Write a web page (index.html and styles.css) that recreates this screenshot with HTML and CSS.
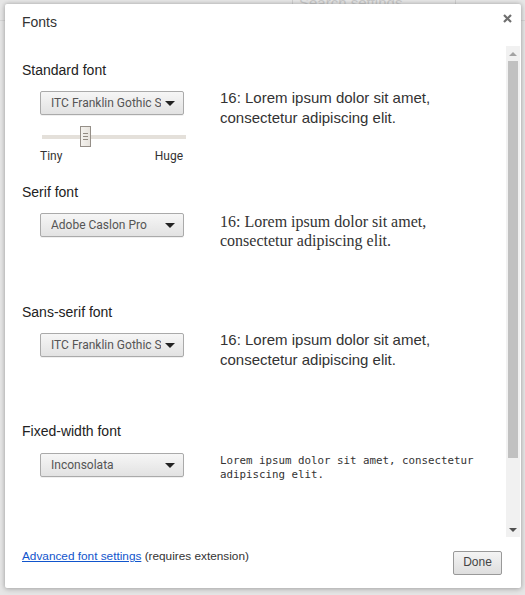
FILE: index.html
```html
<!DOCTYPE html>
<html>
<head>
<meta charset="utf-8">
<link rel="stylesheet" href="styles.css">
</head>
<body>
<div class="backdrop">
  <div class="bg-header">
    <div class="bg-search">Search settings</div>
  </div>
</div>
<div class="dialog">
  <div class="dlg-head">
    <h1 class="dlg-title">Fonts</h1>
    <svg class="close" width="9" height="9" viewBox="0 0 9 9"><path d="M1 1L8 8M8 1L1 8" stroke="#6f6f6f" stroke-width="2.2"/></svg>
  </div>
  <div class="dlg-body">
    <div class="content">
      <section class="sec sec-first">
        <h2 class="sec-title">Standard font</h2>
        <div class="sec-row">
          <div class="ctrl">
            <div class="select"><span class="sel-text">ITC Franklin Gothic S</span><span class="caret"></span></div>
            <div class="slider">
              <div class="track"></div>
              <div class="thumb"><i></i><i></i><i></i></div>
            </div>
            <div class="slider-labels"><span>Tiny</span><span>Huge</span></div>
          </div>
          <p class="sample sample-sans">16: Lorem ipsum dolor sit amet, consectetur adipiscing elit.</p>
        </div>
      </section>
      <section class="sec">
        <h2 class="sec-title">Serif font</h2>
        <div class="sec-row">
          <div class="ctrl">
            <div class="select"><span class="sel-text">Adobe Caslon Pro</span><span class="caret"></span></div>
          </div>
          <p class="sample sample-serif">16: Lorem ipsum dolor sit amet, consectetur adipiscing elit.</p>
        </div>
      </section>
      <section class="sec">
        <h2 class="sec-title">Sans-serif font</h2>
        <div class="sec-row">
          <div class="ctrl">
            <div class="select"><span class="sel-text">ITC Franklin Gothic S</span><span class="caret"></span></div>
          </div>
          <p class="sample sample-sans">16: Lorem ipsum dolor sit amet, consectetur adipiscing elit.</p>
        </div>
      </section>
      <section class="sec sec-last">
        <h2 class="sec-title">Fixed-width font</h2>
        <div class="sec-row">
          <div class="ctrl">
            <div class="select"><span class="sel-text">Inconsolata</span><span class="caret"></span></div>
          </div>
          <p class="sample sample-mono">Lorem ipsum dolor sit amet, consectetur adipiscing elit.</p>
        </div>
      </section>
    </div>
    <div class="scrollbar">
      <div class="sb-btn"><span class="tri-up"></span></div>
      <div class="sb-thumb"></div>
      <div class="sb-track"></div>
      <div class="sb-btn"><span class="tri-down"></span></div>
    </div>
  </div>
  <div class="dlg-foot">
    <p class="foot-text"><a class="link" href="#">Advanced font settings</a> (requires extension)</p>
    <button class="done">Done</button>
  </div>
</div>
</body>
</html>
```

FILE: styles.css
```css
html, body {
  margin: 0;
  padding: 0;
}
body {
  width: 525px;
  height: 595px;
  background: #e6e6e6;
  font-family: "Liberation Sans", Arial, sans-serif;
  overflow: hidden;
  position: relative;
}
.backdrop {
  height: 595px;
}
.bg-header {
  height: 20px;
  border-bottom: 1px solid #d6d6d6;
  display: flex;
  justify-content: flex-start;
  padding-left: 292px;
}
.bg-search {
  width: 156px;
  height: 18px;
  margin-top: -6px;
  border-left: 1px solid #cfcfcf;
  border-right: 1px solid #cfcfcf;
  color: #c9c9c9;
  font-size: 15px;
  padding-left: 6px;
  line-height: 18px;
}
.dialog {
  position: absolute;
  left: 5px;
  top: 4px;
  width: 516px;
  height: 584px;
  background: #fff;
  border-radius: 2px;
  box-shadow: 0 0 4px rgba(0,0,0,0.25), 0 2px 6px rgba(0,0,0,0.12);
  display: flex;
  flex-direction: column;
}
.dlg-head {
  height: 42px;
  display: flex;
  justify-content: space-between;
  align-items: flex-start;
  padding-left: 17px;
  padding-right: 9px;
}
.dlg-title {
  margin: 10px 0 0;
  font-size: 14px;
  font-weight: normal;
  color: #333;
  line-height: 16px;
}
.close {
  margin-top: 10px;
  display: block;
}
.dlg-body {
  height: 491px;
  display: flex;
}
.content {
  flex: 1;
  padding: 16px 0 0 17px;
}
.sec {
  height: 120px;
}
.sec-first {
  height: 122px;
}
.sec-last .sec-title {
  margin-top: -1px;
}
.sec-title {
  margin: 0;
  font-size: 14px;
  font-weight: normal;
  color: #222;
  line-height: 16px;
}
.sec-row {
  display: flex;
  gap: 36px;
  margin-top: 13px;
  padding-left: 18px;
}
.sec-last .sec-row {
  margin-top: 14px;
}
.ctrl {
  width: 144px;
  flex: none;
}
.select {
  height: 22px;
  border: 1px solid #aaa;
  border-radius: 2px;
  background: linear-gradient(#f6f6f6, #e2e2e2);
  box-shadow: 0 1px 0 rgba(0,0,0,0.06);
  display: flex;
  align-items: center;
  justify-content: space-between;
  padding: 0 8px 0 10px;
  box-sizing: content-box;
  width: 124px;
}
.sel-text {
  font-family: Roboto, "Liberation Sans", sans-serif;
  font-size: 12px;
  color: #555;
  white-space: nowrap;
  overflow: hidden;
}
.caret {
  width: 0;
  height: 0;
  border-left: 5px solid transparent;
  border-right: 5px solid transparent;
  border-top: 5px solid #222;
  flex: none;
  margin-left: 4px;
}
.slider {
  position: relative;
  height: 22px;
  margin-top: 11px;
  margin-left: 2px;
}
.track {
  position: absolute;
  left: 0;
  right: -2px;
  top: 9px;
  height: 4px;
  background: #e4e0da;
}
.thumb {
  position: absolute;
  left: 38px;
  top: 0;
  width: 9px;
  height: 19px;
  border: 1px solid #958f88;
  background: linear-gradient(90deg, #f4f2ee, #e7e3dd);
  display: flex;
  flex-direction: column;
  justify-content: center;
  align-items: center;
  gap: 2px;
}
.thumb i {
  display: block;
  width: 5px;
  height: 1px;
  background: #918a82;
}
.slider-labels {
  display: flex;
  justify-content: space-between;
  font-family: Roboto, "Liberation Sans", sans-serif;
  font-size: 12px;
  color: #333;
  margin-top: 1px;
  line-height: 14px;
  padding-right: 1px;
}
.sample {
  margin: -3px 0 0;
  color: #333;
  width: 260px;
}
.sample-sans {
  font-family: "Liberation Sans", Arial, sans-serif;
  font-size: 15px;
  line-height: 20px;
}
.sample-serif {
  font-family: "Liberation Serif", serif;
  font-size: 16px;
  line-height: 19px;
  margin-top: -1px;
}
.sample-mono {
  font-family: "DejaVu Sans Mono", monospace;
  font-size: 10.8px;
  line-height: 14px;
  color: #333;
  margin-top: 1px;
}
.scrollbar {
  width: 14px;
  flex: none;
  display: flex;
  flex-direction: column;
  background: #f1f1f1;
  margin-right: 1px;
}
.sb-btn {
  height: 15px;
  display: flex;
  align-items: center;
  justify-content: center;
  flex: none;
}
.tri-up {
  width: 0;
  height: 0;
  border-left: 4px solid transparent;
  border-right: 4px solid transparent;
  border-bottom: 4px solid #a3a3a3;
}
.tri-down {
  width: 0;
  height: 0;
  border-left: 4px solid transparent;
  border-right: 4px solid transparent;
  border-top: 4px solid #505050;
}
.sb-thumb {
  height: 397px;
  margin: 0 2px;
  background: #c1c1c1;
  flex: none;
}
.sb-track {
  flex: 1;
}
.dlg-foot {
  flex: 1;
  display: flex;
  justify-content: space-between;
  align-items: flex-start;
  padding: 0 19px 0 17px;
}
.foot-text {
  margin: 12px 0 0;
  font-size: 11.8px;
  color: #333;
  line-height: 14px;
}
.link {
  color: #15c;
  text-decoration: underline;
}
.done {
  margin-top: 14px;
  width: 49px;
  height: 24px;
  border: 1px solid #999;
  border-radius: 2px;
  background: linear-gradient(#f4f4f4, #dedede);
  font-family: "Liberation Sans", Arial, sans-serif;
  font-size: 12px;
  color: #444;
  padding: 0 0 2px;
}
```
